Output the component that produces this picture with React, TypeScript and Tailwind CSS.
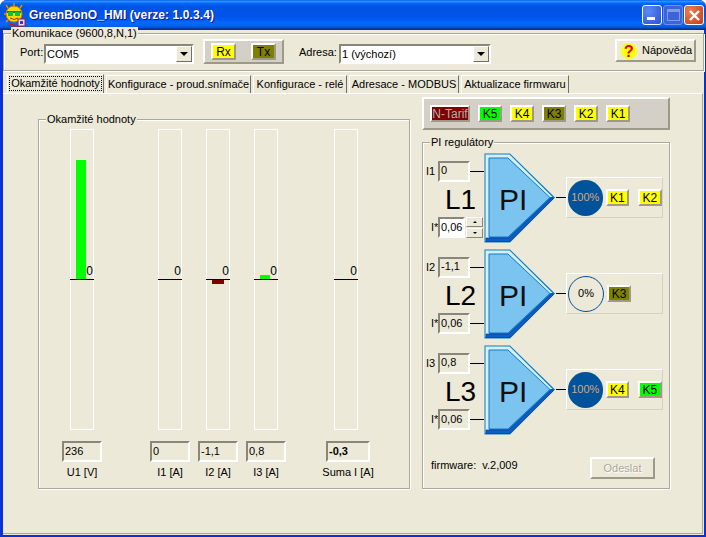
import { ReactNode } from 'react';

const font = { fontFamily: '"Liberation Sans", Arial, sans-serif' };

const sunken = 'border-2 border-t-[#8a877a] border-l-[#8a877a] border-b-white border-r-white';
const raised = 'border-2 border-t-white border-l-white border-b-[#9d9a8a] border-r-[#9d9a8a]';
const etched = 'border border-[#aca899] shadow-[1px_1px_0_#fff,inset_1px_1px_0_#fff]';

const Lamp = ({ text, color, fg = 'text-black', width = 'w-[25px]' }: { text: string; color: string; fg?: string; width?: string }) => (
  <div className={`${width} h-[17px] ${raised} ${color} ${fg} flex items-center justify-center text-[12px] leading-none`}>
    {text}
  </div>
);

const Combo = ({ value, width }: { value: string; width: string }) => (
  <div className={`${width} h-[20px] bg-white ${sunken} flex items-center justify-between`}>
    <span className="pl-[1px] text-[11px] leading-none">{value}</span>
    <div className="w-[16px] h-[16px] bg-[#ece9d8] border border-t-white border-l-white border-b-[#716f64] border-r-[#716f64] flex items-center justify-center">
      <div className="w-0 h-0 border-x-[4px] border-x-transparent border-t-[4px] border-t-black" />
    </div>
  </div>
);

const Group = ({ title, className, children }: { title: string; className: string; children: ReactNode }) => (
  <div className={`relative ${etched} ${className}`}>
    <span className="absolute -top-[7px] left-[7px] bg-[#ece9d8] px-[1px] text-[11px] leading-[13px] whitespace-nowrap">{title}</span>
    {children}
  </div>
);

const Tab = ({ text, width, active }: { text: string; width: string; active?: boolean }) =>
  active ? (
    <div className={`${width} h-[19px] px-[1px] pt-[1px] border border-b-0 border-t-white border-l-white border-r-[#716f64] flex`}>
      <div className="flex-1 h-[15px] border border-dotted border-black flex items-center justify-center text-[11px] leading-none whitespace-nowrap">
        {text}
      </div>
    </div>
  ) : (
    <div className={`${width} h-[18px] ml-[2px] border border-b-0 border-t-white border-l-white border-r-[#716f64] flex items-center justify-center text-[11px] leading-none whitespace-nowrap`}>
      {text}
    </div>
  );

const Gauge = ({ up = 0, down = 0, color = '' }: { up?: number; down?: number; color?: string }) => (
  <div className="ml-2 w-[24px] h-[301px] border-x border-t border-b border-white flex flex-col">
    <div className="h-[149px] flex items-end justify-between pl-[5px]">
      <div className={`w-3 ${color}`} style={{ height: up }} />
      <span className="text-[12px] leading-[13px] pb-[1px]">0</span>
    </div>
    <div className="-mx-[1px] h-px bg-black" />
    <div className="pl-[5px]">
      <div className={`w-3 ${color}`} style={{ height: down }} />
    </div>
  </div>
);

const Meter = ({ label, value, width, bold, children, left }: { label: string; value: string; width: string; bold?: boolean; children: ReactNode; left: string }) => (
  <div className={`${width} ${left} flex flex-col`}>
    {children}
    <div className={`mt-[11px] h-[21px] ${sunken} pl-[1px] flex items-center text-[11px] leading-none ${bold ? 'font-bold' : ''}`}>
      {value}
    </div>
    <div className="mt-[3px] flex justify-center text-[11px] leading-[14px] whitespace-nowrap">{label}</div>
  </div>
);

const PiShape = () => (
  <svg width="72" height="90" viewBox="0 0 72 90" className="block shrink-0">
    <polygon points="0.5,0.5 26,0.5 71,44.5 26,89.5 0.5,89.5" fill="#0a7fc4" />
    <polygon points="1.5,1.5 25.5,1.5 68.5,44 65,44 24,5 5,5 5,85 1.5,88" fill="#d8eef9" />
    <polygon points="5,5 24,5 66,44.5 24,84 5,84" fill="#7bc4f0" stroke="#0a7fc4" />
    <polygon points="2,85 25,85 67,45 70,45 26,88.5 2,88.5" fill="#0c5fc4" stroke="#1c2a94" strokeWidth="0.6" />
    <text x="15" y="57" fontSize="30" fill="#111" fontFamily="Liberation Sans, Arial, sans-serif">PI</text>
  </svg>
);

const spinButton =
  'h-[10px] border border-t-white border-l-white border-b-[#8a877a] border-r-[#8a877a] flex items-center justify-center';

const Spinner = () => (
  <div className="ml-[1px] w-[17px] flex flex-col gap-[1px]">
    <div className={spinButton}>
      <div className="w-0 h-0 border-x-[2px] border-x-transparent border-b-[2px] border-b-black" />
    </div>
    <div className={spinButton}>
      <div className="w-0 h-0 border-x-[2px] border-x-transparent border-t-[2px] border-t-black" />
    </div>
  </div>
);

const PiRow = ({ name, i, iValue, pct, lamps, editable }: { name: string; i: string; iValue: string; pct: string; lamps: ReactNode; editable?: boolean }) => (
  <div className="h-[96px] flex">
    <div className="w-[61px] pt-2 shrink-0">
      <div className="flex items-center">
        <span className="w-[15px] pl-[3px] text-[11px] leading-none">{i}</span>
        <div className={`w-[32px] h-[21px] ${sunken} pl-[1px] flex items-start text-[11px] leading-[14px]`}>{iValue}</div>
        <div className="w-[14px] h-px bg-black" />
      </div>
      <div className="h-[35px] pl-[22px] text-[28px] leading-[35px]">{name}</div>
      <div className="flex items-center">
        <span className="w-[15px] pl-[8px] text-[11px] leading-none">I*</span>
        {editable ? (
          <>
            <div className={`w-[27px] h-[21px] bg-white ${sunken} pl-[1px] flex items-center text-[11px] leading-none`}>0,06</div>
            <Spinner />
          </>
        ) : (
          <>
            <div className={`w-[32px] h-[21px] ${sunken} pl-[1px] flex items-center text-[11px] leading-none`}>0,06</div>
            <div className="w-[14px] h-px bg-black" />
          </>
        )}
      </div>
    </div>
    <PiShape />
    <div className="shrink-0 w-[10px] h-px mt-[44px] bg-black" />
    <div className="mt-[24px] w-[97px] h-[41px] border border-t-white border-l-white border-r-[#d5d2c3] border-b-[#d5d2c3] flex items-center gap-[3px] pl-[1px]">
      {pct === '100%' ? (
        <div className="w-9 h-9 rounded-full bg-[#00529b] text-[#d8a878] flex items-center justify-center text-[11px] leading-none">{pct}</div>
      ) : (
        <div className="w-9 h-9 rounded-full border border-[#00529b] flex items-center justify-center text-[11px] leading-none">{pct}</div>
      )}
      {lamps}
    </div>
  </div>
);

const Sun = () => (
  <svg width="22" height="25" viewBox="0 0 22 25" className="shrink-0">
    <g stroke="#f08a00" strokeWidth="1.4">
      <line x1="10" y1="0" x2="10" y2="3" />
      <line x1="2" y1="2" x2="4" y2="5" />
      <line x1="18" y1="2" x2="16" y2="5" />
      <line x1="0" y1="11" x2="2" y2="11" />
      <line x1="2" y1="19" x2="4" y2="17" />
    </g>
    <circle cx="10" cy="11" r="8" fill="#ffd800" stroke="#e07000" />
    <rect x="3" y="8" width="14" height="2" fill="#0a8a2a" />
    <rect x="4" y="9" width="5" height="4" fill="#10c040" />
    <rect x="11" y="9" width="5" height="4" fill="#10c040" />
    <path d="M6 15 Q10 18 14 15" stroke="#a03000" fill="none" />
    <path d="M5 21 L15 24" stroke="#c02020" strokeWidth="2" />
    <rect x="14" y="16" width="7" height="7" fill="#e8d8f0" stroke="#a02030" />
    <rect x="16" y="18" width="3" height="3" fill="#3040c0" />
  </svg>
);

const titleGradient =
  'bg-[linear-gradient(180deg,#0058ee_0%,#3593ff_4%,#288eff_6%,#127dff_8%,#036ffc_10%,#0262ee_14%,#0057e5_20%,#0054e3_24%,#0055eb_56%,#005bf5_66%,#026afe_76%,#0062ef_86%,#0052d6_92%,#0040ab_94%,#003092_100%)]';

const App = () => {
  return (
    <div style={font} className="w-[706px] h-[537px] flex flex-col overflow-hidden text-black bg-[#0831d9] rounded-t-[7px] select-none">
      {/* title bar */}
      <div className={`h-[30px] shrink-0 ${titleGradient} flex items-center pl-1 pr-[2px]`}>
        <Sun />
        <span className="ml-[3px] text-white font-bold text-[12px] tracking-[0.1px] [text-shadow:1px_1px_0_#0f1089]">GreenBonO_HMI (verze: 1.0.3.4)</span>
        <div className="ml-auto flex gap-[1px]">
          <div className="w-[20px] h-[20px] rounded-[3px] border border-white bg-[radial-gradient(circle_at_30%_30%,#5b8cf0,#2a50d8)] flex items-end pl-1 pb-1">
            <div className="w-2 h-[3px] bg-white" />
          </div>
          <div className="w-[20px] h-[20px] rounded-[3px] border border-[#6f92e8] bg-[#3a64d8] flex items-center justify-center">
            <div className="w-[13px] h-[12px] border border-t-[3px] border-[#7f9ce8]" />
          </div>
          <div className="w-[20px] h-[20px] rounded-[3px] border border-white bg-[radial-gradient(circle_at_30%_30%,#e8805a,#c93a12)] flex items-center justify-center">
            <svg width="13" height="13" viewBox="0 0 13 13">
              <path d="M2 2 L11 11 M11 2 L2 11" stroke="#fff" strokeWidth="2.4" />
            </svg>
          </div>
        </div>
      </div>

      {/* client area */}
      <div className="flex-1 ml-[3px] mr-[2px] mb-[2px] bg-[#ece9d8] flex flex-col min-h-0 text-[11px]">
        <Group title="Komunikace (9600,8,N,1)" className="mt-[3px] h-[38px] shrink-0 flex items-start pl-4">
          <div className="w-[24px] mt-[13px] leading-none whitespace-nowrap">Port:</div>
          <div className="mt-[10px]"><Combo value="COM5" width="w-[150px]" /></div>
          <div className={`ml-[9px] mt-[5px] w-[81px] h-[25px] bg-[#d4d0c8] ${raised} flex items-center pl-[6px] gap-[15px]`}>
            <Lamp text="Rx" color="bg-[#ffff00]" />
            <Lamp text="Tx" color="bg-[#808000]" />
          </div>
          <div className="ml-[15px] w-[40px] mt-[13px] leading-none whitespace-nowrap">Adresa:</div>
          <div className="mt-[10px]"><Combo value="1 (výchozí)" width="w-[152px]" /></div>
          <div className={`ml-[124px] mt-[5px] w-[81px] h-[23px] ${raised} flex items-center pl-[4px] gap-[5px]`}>
            <svg width="16" height="16" viewBox="0 0 16 16" className="shrink-0">
              <defs>
                <pattern id="dither" width="2" height="2" patternUnits="userSpaceOnUse">
                  <rect width="2" height="2" fill="#ffff00" />
                  <rect width="1" height="1" fill="#ece9d8" />
                </pattern>
              </defs>
              <circle cx="8" cy="8" r="8" fill="url(#dither)" />
              <text x="8" y="14" textAnchor="middle" fontSize="16" fontWeight="bold" fill="#e00000" fontFamily="Liberation Sans, Arial, sans-serif">?</text>
            </svg>
            <span className="leading-none">Nápověda</span>
          </div>
        </Group>

        <div className="mt-[2px] h-[20px] shrink-0 pl-1 flex items-end">
          <Tab text="Okamžité hodnoty" width="w-[97px]" active />
          <Tab text="Konfigurace - proud.snímače" width="w-[145px]" />
          <Tab text="Konfigurace - relé" width="w-[94px]" />
          <Tab text="Adresace - MODBUS" width="w-[110px]" />
          <Tab text="Aktualizace firmwaru" width="w-[108px]" />
        </div>

        <div className="flex-1 mr-px mb-px border-t border-t-white border-r border-r-[#aca899] border-b border-b-[#aca899] flex items-start pl-[35px] min-h-0">
          <Group title="Okamžité hodnoty" className="mt-[25px] w-[372px] h-[370px] flex items-start pt-[9px] pl-[23px]">
            <Meter label="U1 [V]" value="236" width="w-[40px]" left="">
              <Gauge up={119} color="bg-[#00ff00]" />
            </Meter>
            <Meter label="I1 [A]" value="0" width="w-[40px]" left="ml-[48px]">
              <Gauge />
            </Meter>
            <Meter label="I2 [A]" value="-1,1" width="w-[40px]" left="ml-2">
              <Gauge down={4} color="bg-[#800000]" />
            </Meter>
            <Meter label="I3 [A]" value="0,8" width="w-[40px]" left="ml-2">
              <Gauge up={4} color="bg-[#00ff00]" />
            </Meter>
            <Meter label="Suma I [A]" value="-0,3" width="w-[44px]" left="ml-10" bold>
              <Gauge />
            </Meter>
          </Group>

          <div className="ml-3 w-[248px] pt-[3px] shrink-0">
            <div className={`h-[33px] bg-[#d4d0c8] ${raised} flex items-center pl-[6px] gap-2`}>
              <Lamp text="N-Tarif" color="bg-[#800000]" fg="text-[#b0b0b0]" width="w-[40px]" />
              <Lamp text="K5" color="bg-[#00ff00]" width="w-[24px]" />
              <Lamp text="K4" color="bg-[#ffff00]" width="w-[24px]" />
              <Lamp text="K3" color="bg-[#808000]" width="w-[24px]" />
              <Lamp text="K2" color="bg-[#ffff00]" width="w-[24px]" />
              <Lamp text="K1" color="bg-[#ffff00]" width="w-[24px]" />
            </div>
            <Group title="PI regulátory" className="mt-3 h-[347px] pt-[10px]">
              <PiRow
                name="L1"
                i="I1"
                iValue="0"
                pct="100%"
                editable
                lamps={
                  <>
                    <Lamp text="K1" color="bg-[#ffff00]" width="w-[24px]" />
                    <div className="w-[3px]" />
                    <Lamp text="K2" color="bg-[#ffff00]" width="w-[25px]" />
                  </>
                }
              />
              <PiRow name="L2" i="I2" iValue="-1,1" pct="0%" lamps={<Lamp text="K3" color="bg-[#808000]" width="w-[24px]" />} />
              <PiRow
                name="L3"
                i="I3"
                iValue="0,8"
                pct="100%"
                lamps={
                  <>
                    <Lamp text="K4" color="bg-[#ffff00]" width="w-[24px]" />
                    <div className="w-[3px]" />
                    <Lamp text="K5" color="bg-[#00ff00]" width="w-[25px]" />
                  </>
                }
              />
              <div className="mt-[16px] flex items-start justify-between pl-2 pr-[14px]">
                <span className="mt-[1px] leading-[14px] whitespace-nowrap">firmware:&nbsp;&nbsp;v.2,009</span>
                <div className={`w-[65px] h-[22px] ${raised} flex items-center justify-center text-[#aca899] leading-none [text-shadow:1px_1px_0_#fff]`}>Odeslat</div>
              </div>
            </Group>
          </div>
        </div>
      </div>
    </div>
  );
};

export default App;
